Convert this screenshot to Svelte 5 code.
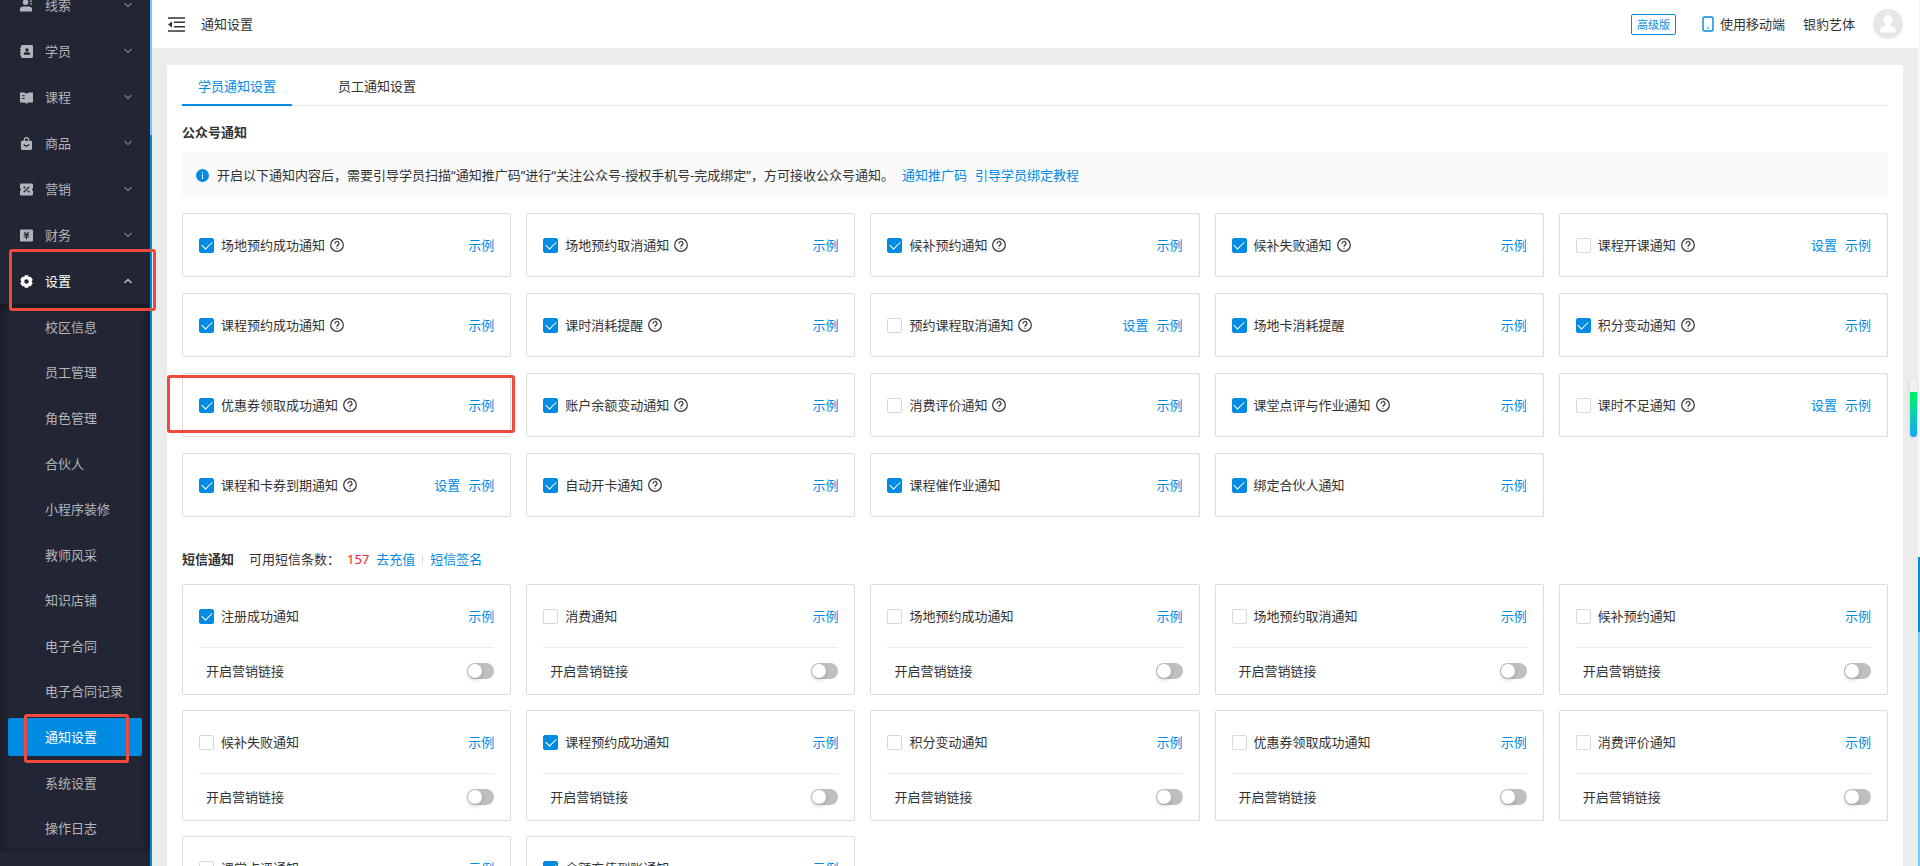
<script>
  let menus = [
    { name: '线索', icon: 'clue' },
    { name: '学员', icon: 'student' },
    { name: '课程', icon: 'course' },
    { name: '商品', icon: 'goods' },
    { name: '营销', icon: 'market' },
    { name: '财务', icon: 'finance' },
    { name: '设置', icon: 'setting', open: true }
  ];

  let subMenus = [
    '校区信息', '员工管理', '角色管理', '合伙人', '小程序装修', '教师风采',
    '知识店铺', '电子合同', '电子合同记录', '通知设置', '系统设置', '操作日志'
  ];
  let current = '通知设置';

  let tabs = ['学员通知设置', '员工通知设置'];
  let activeTab = 0;

  let wechatList = [
    { name: '场地预约成功通知', checked: true, help: true },
    { name: '场地预约取消通知', checked: true, help: true },
    { name: '候补预约通知', checked: true, help: true },
    { name: '候补失败通知', checked: true, help: true },
    { name: '课程开课通知', checked: false, help: true, config: true },
    { name: '课程预约成功通知', checked: true, help: true },
    { name: '课时消耗提醒', checked: true, help: true },
    { name: '预约课程取消通知', checked: false, help: true, config: true },
    { name: '场地卡消耗提醒', checked: true },
    { name: '积分变动通知', checked: true, help: true },
    { name: '优惠券领取成功通知', checked: true, help: true, marked: true },
    { name: '账户余额变动通知', checked: true, help: true },
    { name: '消费评价通知', checked: false, help: true },
    { name: '课堂点评与作业通知', checked: true, help: true },
    { name: '课时不足通知', checked: false, help: true, config: true },
    { name: '课程和卡券到期通知', checked: true, help: true, config: true },
    { name: '自动开卡通知', checked: true, help: true },
    { name: '课程催作业通知', checked: true },
    { name: '绑定合伙人通知', checked: true }
  ];

  let smsCount = 157;
  let smsList = [
    { name: '注册成功通知', checked: true, link: false },
    { name: '消费通知', checked: false, link: false },
    { name: '场地预约成功通知', checked: false, link: false },
    { name: '场地预约取消通知', checked: false, link: false },
    { name: '候补预约通知', checked: false, link: false },
    { name: '候补失败通知', checked: false, link: false },
    { name: '课程预约成功通知', checked: true, link: false },
    { name: '积分变动通知', checked: false, link: false },
    { name: '优惠券领取成功通知', checked: false, link: false },
    { name: '消费评价通知', checked: false, link: false },
    { name: '课堂点评通知', checked: false, link: false },
    { name: '余额充值到账通知', checked: true, link: false }
  ];
</script>

<div class="layout">
  <aside class="sidebar">
    <nav>
      {#each menus as menu}
        <button class="menu" class:open={menu.open}>
          <svg class="menu-icon" viewBox="0 0 14 14" fill="currentColor">
            {#if menu.icon === 'clue'}
              <circle cx="6" cy="3.5" r="3" />
              <path d="M0 13.500V11Q0 8 3.500 8H9.500Q13 8 13 11V13.500ZM10.500 1.500H13V3H10.500ZM11 4.500H13V6H11Z" />
            {:else if menu.icon === 'student'}
              <path fill-rule="evenodd" d="M2.500 0H12.500Q14 0 14 1.500V12.500Q14 14 12.500 14H2.500Q1 14 1 12.500V11H0V9.500H1V7.700H0V6.200H1V4.500H0V3H1V1.500Q1 0 2.500 0ZM7.500 3.500A1.900 1.900 0 1 0 7.500 7.300A1.900 1.900 0 1 0 7.500 3.500ZM4 10.500H11V9.500Q11 7.800 9.500 7.800H5.500Q4 7.800 4 9.500Z" />
            {:else if menu.icon === 'course'}
              <path fill-rule="evenodd" d="M0 1.500H4.500L7 3L9.500 1.500H14V12.500H9L7 13.800L5 12.500H0ZM2 4.500V5.700H5V4.500ZM2 7.500V8.700H5V7.500Z" />
            {:else if menu.icon === 'goods'}
              <path fill-rule="evenodd" d="M4 4V3A3 3 0 0 1 10 3V4H11.500Q13 4 13 5.500V12.500Q13 14 11.500 14H2.500Q1 14 1 12.500V5.500Q1 4 2.500 4ZM5.300 4H8.700V3A1.700 1.700 0 0 0 5.300 3ZM3.500 8Q7 13 10.500 8L9.500 7.500Q7 10.500 4.500 7.500Z" />
            {:else if menu.icon === 'market'}
              <path d="M1.500 .500H12.500Q14 .500 14 2V5.800A1.200 1.200 0 0 0 14 8.200V12Q14 13.500 12.500 13.500H1.500Q0 13.500 0 12V8.200A1.200 1.200 0 0 0 0 5.800V2Q0 .500 1.500 .500Z" />
              <path d="M10 4L4 10" stroke="#222533" stroke-width="1.300" />
              <circle cx="4.800" cy="4.800" r="1.100" fill="#222533" />
              <circle cx="9.200" cy="9.200" r="1.100" fill="#222533" />
            {:else if menu.icon === 'finance'}
              <rect y="0.500" width="14" height="13" rx="1.500" />
              <path d="M4.500 3L7 6L9.500 3M4 6.300H10M4 8.600H10M7 6V11" fill="none" stroke="#222533" stroke-width="1.200" />
            {:else}
              <path fill-rule="evenodd" d="M5.200 .3H8.800L9.500 2.200L11.500 1.900L13.700 5L12.500 7L13.700 9L11.500 12.100L9.500 11.800L8.800 13.700H5.200L4.500 11.800L2.500 12.100L.3 9L1.500 7L.3 5L2.500 1.900L4.500 2.200ZM7 4.600A2.400 2.400 0 1 0 7 9.400A2.400 2.400 0 1 0 7 4.600Z" />
            {/if}
          </svg>
          <span>{menu.name}</span>
          <svg class="arrow" viewBox="0 0 8 8"><path d={menu.open ? 'M.5 6L4 2.500L7.500 6' : 'M.5 2L4 5.500L7.500 2'} /></svg>
          {#if menu.open}<i class="mark mark-menu"></i>{/if}
        </button>
      {/each}
      <ul class="submenu">
        {#each subMenus as item}
          <li>
            <a href="#top" class:active={item === current}>{item}</a>
            {#if item === current}<i class="mark mark-sub"></i>{/if}
          </li>
        {/each}
      </ul>
    </nav>
  </aside>

  <main>
    <header>
      <button class="fold" aria-label="收起菜单">
        <svg viewBox="0 0 17 15">
          <path d="M0 1H17M6 5.300H17M6 9.700H17M0 14H17" stroke="#333" stroke-width="1.400" />
          <path d="M0 7.500L4 4.500V10.500Z" fill="#333" />
        </svg>
      </button>
      <h1>通知设置</h1>
      <span class="version">高级版</span>
      <a class="mobile" href="#top">
        <svg viewBox="0 0 12 16"><rect x="1" y="1" width="10" height="14" rx="1.500" /><path d="M5.300 12H6.700" /></svg>
        使用移动端
      </a>
      <span class="shop">银豹艺体</span>
      <svg class="avatar" viewBox="0 0 30 30">
        <circle cx="15" cy="15" r="15" fill="#e6e6e6" />
        <circle cx="15" cy="10.500" r="4.500" fill="#fff" />
        <path d="M12.500 14H17.500V16.500L21 18Q23 19 23 23.500H7Q7 19 9 18L12.500 16.500Z" fill="#fff" />
      </svg>
    </header>

    <section class="panel">
      <div class="tabs">
        {#each tabs as tab, i}
          <button class="tab" class:active={activeTab === i} on:click={() => (activeTab = i)}>{tab}</button>
        {/each}
      </div>

      <h2 class="wechat-title">公众号通知</h2>
      <div class="tip">
        <svg class="info" viewBox="0 0 14 14"><circle cx="7" cy="7" r="7" fill="#008be3" /><path d="M7 3.200V4.500M7 5.500V10.800" stroke="#fff" /></svg>
        <span>开启以下通知内容后，需要引导学员扫描“通知推广码”进行“关注公众号-授权手机号-完成绑定”，方可接收公众号通知。</span>
        <a href="#top">通知推广码</a>
        <a href="#top">引导学员绑定教程</a>
      </div>

      <div class="cards wechat">
        {#each wechatList as item}
          <div class="card">
            <div class="row">
              <label><input type="checkbox" bind:checked={item.checked} />{item.name}</label>
              {#if item.help}
                <svg class="help" viewBox="0 0 14 14">
                  <circle cx="7" cy="7" r="6.300" />
                  <path d="M5 5.700A2 2 0 1 1 7.600 7.400Q7 7.700 7 8.700M7 9.700V10.800" />
                </svg>
              {/if}
              <span class="links">
                {#if item.config}<a href="#top">设置</a>{/if}
                <a href="#top">示例</a>
              </span>
            </div>
            {#if item.marked}<i class="mark mark-card"></i>{/if}
          </div>
        {/each}
      </div>

      <div class="sms-title">
        <h2>短信通知</h2>
        <span>可用短信条数：</span>
        <span class="count">{smsCount}</span>
        <a href="#top">去充值</a>
        <i class="line"></i>
        <a href="#top">短信签名</a>
      </div>

      <div class="cards sms">
        {#each smsList as item}
          <div class="card">
            <div class="row">
              <label><input type="checkbox" bind:checked={item.checked} />{item.name}</label>
              <span class="links"><a href="#top">示例</a></span>
            </div>
            <label class="switch-row">
              开启营销链接
              <input class="switch" type="checkbox" role="switch" bind:checked={item.link} />
            </label>
          </div>
        {/each}
      </div>
    </section>
  </main>

  <div class="page-scroll"><i></i></div>
  <div class="float-bar"></div>
</div>

<style>
  :global(body) {
    overflow: hidden;
  }
  .layout {
    display: flex;
    position: relative;
    height: 100vh;
    overflow: hidden;
    background: #ececec;
    color: #333;
    font-family: "Noto Sans", "Noto Sans CJK SC", sans-serif;
    font-size: 13px;
    line-height: 20px;
  }
  .layout * {
    box-sizing: border-box;
  }
  button {
    border: none;
    padding: 0;
    background: none;
    color: inherit;
    font: inherit;
    cursor: pointer;
  }
  a {
    color: #008be3;
    text-decoration: none;
  }
  h1, h2 {
    margin: 0;
    font-size: 13px;
  }

  .sidebar {
    flex: none;
    width: 152px;
    background: #222533;
    border-right: 2px solid;
    border-image: linear-gradient(#6fcbff 136px, #008be3 136px) 1;
  }
  /* menu list is scrolled down a little */
  nav {
    display: flex;
    flex-direction: column;
    height: calc(100vh + 18px);
    margin-top: -18px;
    padding-bottom: 15px;
  }
  .menu {
    display: flex;
    flex: none;
    align-items: center;
    position: relative;
    height: 46px;
    padding: 0 18px 0 20px;
    color: #b4b5ba;
  }
  .menu.open {
    color: #fff;
  }
  .menu-icon {
    width: 13px;
    height: 13px;
    margin-right: 12px;
  }
  .arrow {
    width: 8px;
    height: 8px;
    margin-left: auto;
    fill: none;
    stroke: #72747e;
    stroke-width: 1.500;
  }
  .open .arrow {
    stroke: #c4c5c9;
  }
  .submenu {
    display: flex;
    flex: 1;
    flex-direction: column;
    margin: 0;
    padding: 0;
    list-style: none;
    box-shadow: inset 0 2px 8px rgba(0, 0, 0, 0.45);
  }
  .submenu li {
    display: flex;
    flex: 1;
    position: relative;
    padding: 4px 8px;
  }
  .submenu a {
    display: flex;
    flex: 1;
    align-items: center;
    padding-left: 37px;
    border-radius: 2px;
    color: #b4b5ba;
  }
  .submenu a.active {
    background: #008be3;
    color: #fff;
  }

  /* red highlight frames */
  .mark {
    position: absolute;
    z-index: 5;
    border: 3px solid #f04a3e;
    border-radius: 3px;
    pointer-events: none;
  }
  .mark-menu {
    inset: -9px -6px -7px 9px;
  }
  .mark-sub {
    inset: 0 21px -3px 24px;
  }
  .mark-card {
    inset: 1px -5px 3px -16px;
  }

  main {
    flex: 1;
    min-width: 0;
  }
  header {
    display: flex;
    align-items: center;
    height: 48px;
    padding: 0 15px 0 16px;
    background: #fff;
  }
  .fold {
    display: flex;
    width: 17px;
    height: 15px;
    margin-right: 16px;
  }
  h1 {
    flex: 1;
    font-weight: 400;
  }
  .version {
    padding: 0 5px;
    border: 1px solid #008be3;
    border-radius: 2px;
    color: #008be3;
    font-size: 11px;
    line-height: 19px;
  }
  .mobile {
    display: flex;
    align-items: center;
    gap: 6px;
    margin-left: 26px;
    color: #333;
  }
  .mobile svg {
    width: 12px;
    height: 16px;
    fill: none;
    stroke: #008be3;
    stroke-width: 1.400;
  }
  .shop {
    margin: 0 18px;
  }
  .avatar {
    width: 30px;
    height: 30px;
  }

  .panel {
    min-height: 100vh;
    margin: 17px 15px 0;
    padding: 0 15px;
    background: #fff;
  }
  .tabs {
    display: flex;
    gap: 30px;
    height: 41px;
    border-bottom: 1px solid #ebebeb;
  }
  .tab {
    height: 41px;
    padding: 2px 16px 0;
    border-bottom: 2px solid transparent;
  }
  .tab.active {
    border-color: #008be3;
    color: #008be3;
  }
  .wechat-title {
    padding: 16px 0 10px;
  }
  .tip {
    display: flex;
    align-items: center;
    gap: 8px;
    height: 46px;
    padding: 0 14px;
    background: #fafafa;
  }
  .info {
    width: 13px;
    height: 13px;
  }

  .cards {
    display: grid;
    grid-template-columns: repeat(5, 1fr);
    gap: 15px;
  }
  .wechat {
    margin-top: 15px;
    row-gap: 16px;
  }
  .card {
    position: relative;
    padding: 0 16px;
    border: 1px solid #dcdcdc;
    border-radius: 2px;
  }
  .row {
    display: flex;
    align-items: center;
    gap: 5px;
    height: 62px;
  }
  .row label {
    display: flex;
    align-items: center;
    gap: 7px;
  }
  .row input {
    appearance: none;
    width: 15px;
    height: 15px;
    margin: 0;
    border: 1px solid #d9d9d9;
    border-radius: 2px;
    background: #fff;
  }
  .row input:checked {
    display: grid;
    place-items: center;
    border-color: #008be3;
    background: #008be3;
  }
  .row input:checked::before {
    content: "";
    width: 9px;
    height: 5px;
    margin-bottom: 3px;
    border: solid #fff;
    border-width: 0 0 1px 1px;
    rotate: -45deg;
  }
  .help {
    width: 14px;
    height: 14px;
    fill: none;
    stroke: #333;
    stroke-width: 1.200;
  }
  .links {
    display: flex;
    gap: 8px;
    margin-left: auto;
  }

  .sms-title {
    display: flex;
    align-items: center;
    gap: 7px;
    padding: 32px 0 15px;
  }
  .sms-title h2 {
    margin-right: 8px;
  }
  .count {
    color: #f5222d;
  }
  .line {
    width: 1px;
    height: 9px;
    background: #d9d9d9;
  }
  .switch-row {
    display: flex;
    align-items: center;
    justify-content: space-between;
    height: 47px;
    padding-left: 7px;
    border-top: 1px solid #ebebeb;
  }
  .switch {
    appearance: none;
    width: 27px;
    height: 16px;
    margin: 0;
    padding: 1px;
    border-radius: 8px;
    background: #bfbfbf;
  }
  .switch::before {
    content: "";
    display: block;
    width: 14px;
    height: 14px;
    border-radius: 50%;
    background: #fff;
    box-shadow: 0 2px 4px rgba(0, 35, 11, 0.2);
  }
  .switch:checked {
    background: #008be3;
  }
  .switch:checked::before {
    margin-left: auto;
  }

  .page-scroll {
    flex: none;
    width: 2px;
    padding-top: 557px;
    background: linear-gradient(#f3f9ff 600px, #6fcbff 600px);
  }
  .page-scroll i {
    display: block;
    height: 75px;
    background: #008be3;
  }
  .float-bar {
    position: absolute;
    top: 379px;
    right: 3px;
    width: 7px;
    height: 58px;
    border-radius: 4px;
    background: linear-gradient(#f2f2f2 13px, #00ee6e 13px, #00ee6e 18px, #18a4fb);
    box-shadow: 0 0 4px rgba(0, 0, 0, 0.1);
  }
</style>
